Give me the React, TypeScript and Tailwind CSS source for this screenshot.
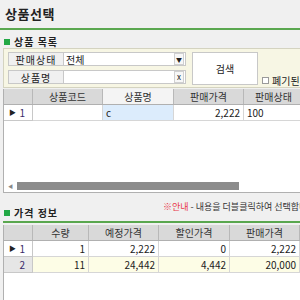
import React from "react";

const font = { fontFamily: '"Noto Sans CJK KR", "Noto Sans", sans-serif' };

function SectionTitle({ text }: { text: string }) {
  return (
    <div className="h-[10px] flex items-center gap-[4px] pl-[4px] text-[10px] font-bold text-[#222] leading-none">
      <span className="w-[6px] h-[6px] bg-[#22a845]" />
      <span className="tracking-[1px]">{text}</span>
    </div>
  );
}

function HeadCell({ w, text, light }: { w: string; text?: string; light?: boolean }) {
  return (
    <div
      className={`${w} shrink-0 h-full flex items-center justify-center border-r border-[#b8b8b8] ${
        light ? "bg-[#f4f4f4]" : "bg-[#d9d9d9]"
      }`}
    >
      {text}
    </div>
  );
}

function Cell({
  w,
  text,
  align = "right",
  bg = "",
}: {
  w: string;
  text?: string;
  align?: "left" | "right";
  bg?: string;
}) {
  return (
    <div
      className={`${w} shrink-0 h-full flex items-center px-[3px] border-r border-b border-[#d6d6d6] ${bg} ${
        align === "right" ? "justify-end" : "justify-start"
      }`}
    >
      {text}
    </div>
  );
}

function RowHead({ n, current, bg }: { n: string; current?: boolean; bg: string }) {
  return (
    <div className={`w-[29px] shrink-0 h-full flex items-center justify-between pl-[5px] pr-[7px] border-r border-b border-[#c8c8c8] ${bg}`}>
      <span className="text-[7px] text-[#222]">{current ? "▶" : ""}</span>
      <span className="text-[#3a2a6a]">{n}</span>
    </div>
  );
}

export default function App() {
  return (
    <div className="w-[300px] h-[300px] overflow-hidden bg-[#f0f0f0] text-[10px] text-[#222]" style={font}>
      {/* title */}
      <div className="h-[28px] flex items-center pl-[5px] text-[13px] font-bold tracking-[0.5px]">상품선택</div>
      <div className="h-[2px] bg-[#5aa74f]" />

      <div className="h-[7px]" />
      <SectionTitle text="상품 목록" />
      <div className="h-[1px]" />

      {/* search panel */}
      <div className="ml-[3px] w-[320px] h-[40px] bg-[#f7f6e4] border border-[#d4d3c0] flex pt-[3px] pl-[4px]">
        <div className="flex flex-col gap-[4px]">
          <div className="flex h-[14px]">
            <div className="w-[56px] h-full bg-[#f0f0f0] border border-[#c8c8c8] flex items-center justify-center tracking-[1px]">판매상태</div>
            <div className="w-[122px] h-full bg-white border border-[#c8c8c8] border-l-0 flex items-center pl-[2px] justify-between">
              <span>전체</span>
              <span className="w-[10px] h-[12px] border border-[#d0d0d0] flex items-center justify-center text-[6px] mr-[1px] bg-[#f7f7f7]">▼</span>
            </div>
          </div>
          <div className="flex h-[14px]">
            <div className="w-[56px] h-full bg-[#f0f0f0] border border-[#c8c8c8] flex items-center justify-center tracking-[1px]">상품명</div>
            <div className="w-[122px] h-full bg-white border border-[#c8c8c8] border-l-0 flex items-center justify-end">
              <span className="w-[10px] h-[12px] border border-[#d0d0d0] flex items-center justify-center text-[8px] mr-[1px] bg-[#f7f7f7] leading-none">x</span>
            </div>
          </div>
        </div>
        <div className="ml-[6px] w-[66px] h-[33px] bg-white border border-[#c8c8c8] flex items-center justify-center">검색</div>
        <div className="ml-[4px] self-start mt-[21px] flex items-center gap-[3px]">
          <span className="w-[7px] h-[7px] bg-white border border-[#9a9a9a]" />
          <span>폐기된</span>
        </div>
      </div>

      <div className="h-[1px]" />

      {/* grid 1 */}
      <div className="ml-[3px] w-[300px] h-[104px] bg-white border-l border-b border-[#b0b0b0] flex flex-col">
        <div className="h-[16px] flex border-b border-[#b0b0b0] text-[#333]">
          <HeadCell w="w-[29px]" />
          <HeadCell w="w-[70px]" text="상품코드" />
          <HeadCell w="w-[71px]" text="상품명" light />
          <HeadCell w="w-[70px]" text="판매가격" />
          <HeadCell w="w-[60px]" text="판매상태" />
        </div>
        <div className="h-[16px] flex">
          <RowHead n="1" current bg="bg-white" />
          <Cell w="w-[70px]" />
          <Cell w="w-[71px]" text="c" align="left" bg="bg-[#dcecfc]" />
          <Cell w="w-[70px]" text="2,222" />
          <Cell w="w-[60px]" text="100" align="left" />
        </div>
        <div className="flex-1" />
        <div className="h-[9px] flex items-center mb-[2px]">
          <span className="w-[13px] text-[5px] text-[#888] flex justify-center">◀</span>
          <div className="w-[222px] h-[8px] bg-[#8c8c8c]" />
        </div>
      </div>

      {/* info + section 2 */}
      <div className="h-[28px] relative">
        <div className="absolute left-[163px] top-[9px] whitespace-nowrap text-[9px] leading-none">
          <span className="text-[#e8384a]">※안내</span>
          <span className="text-[#333]"> - 내용을 더블클릭하여 선택합니다</span>
        </div>
        <div className="absolute left-0 top-[15px]">
          <SectionTitle text="가격 정보" />
        </div>
      </div>
      <div className="ml-[3px] h-[2px] bg-[#5aa74f]" />
      <div className="h-[2px]" />

      {/* grid 2 */}
      <div className="ml-[3px] w-[300px] h-[80px] bg-white border-l border-[#b0b0b0] flex flex-col">
        <div className="h-[16px] flex border-b border-[#b0b0b0] text-[#333]">
          <HeadCell w="w-[29px]" />
          <HeadCell w="w-[56px]" text="수량" />
          <HeadCell w="w-[70px]" text="예정가격" />
          <HeadCell w="w-[71px]" text="할인가격" />
          <HeadCell w="w-[70px]" text="판매가격" />
        </div>
        <div className="h-[16px] flex">
          <RowHead n="1" current bg="bg-white" />
          <Cell w="w-[56px]" text="1" />
          <Cell w="w-[70px]" text="2,222" />
          <Cell w="w-[71px]" text="0" />
          <Cell w="w-[70px]" text="2,222" />
        </div>
        <div className="h-[16px] flex">
          <RowHead n="2" bg="bg-[#e6e6e6]" />
          <Cell w="w-[56px]" text="11" bg="bg-[#fdfde6]" />
          <Cell w="w-[70px]" text="24,442" bg="bg-[#fdfde6]" />
          <Cell w="w-[71px]" text="4,442" bg="bg-[#fdfde6]" />
          <Cell w="w-[70px]" text="20,000" bg="bg-[#fdfde6]" />
        </div>
      </div>
    </div>
  );
}
